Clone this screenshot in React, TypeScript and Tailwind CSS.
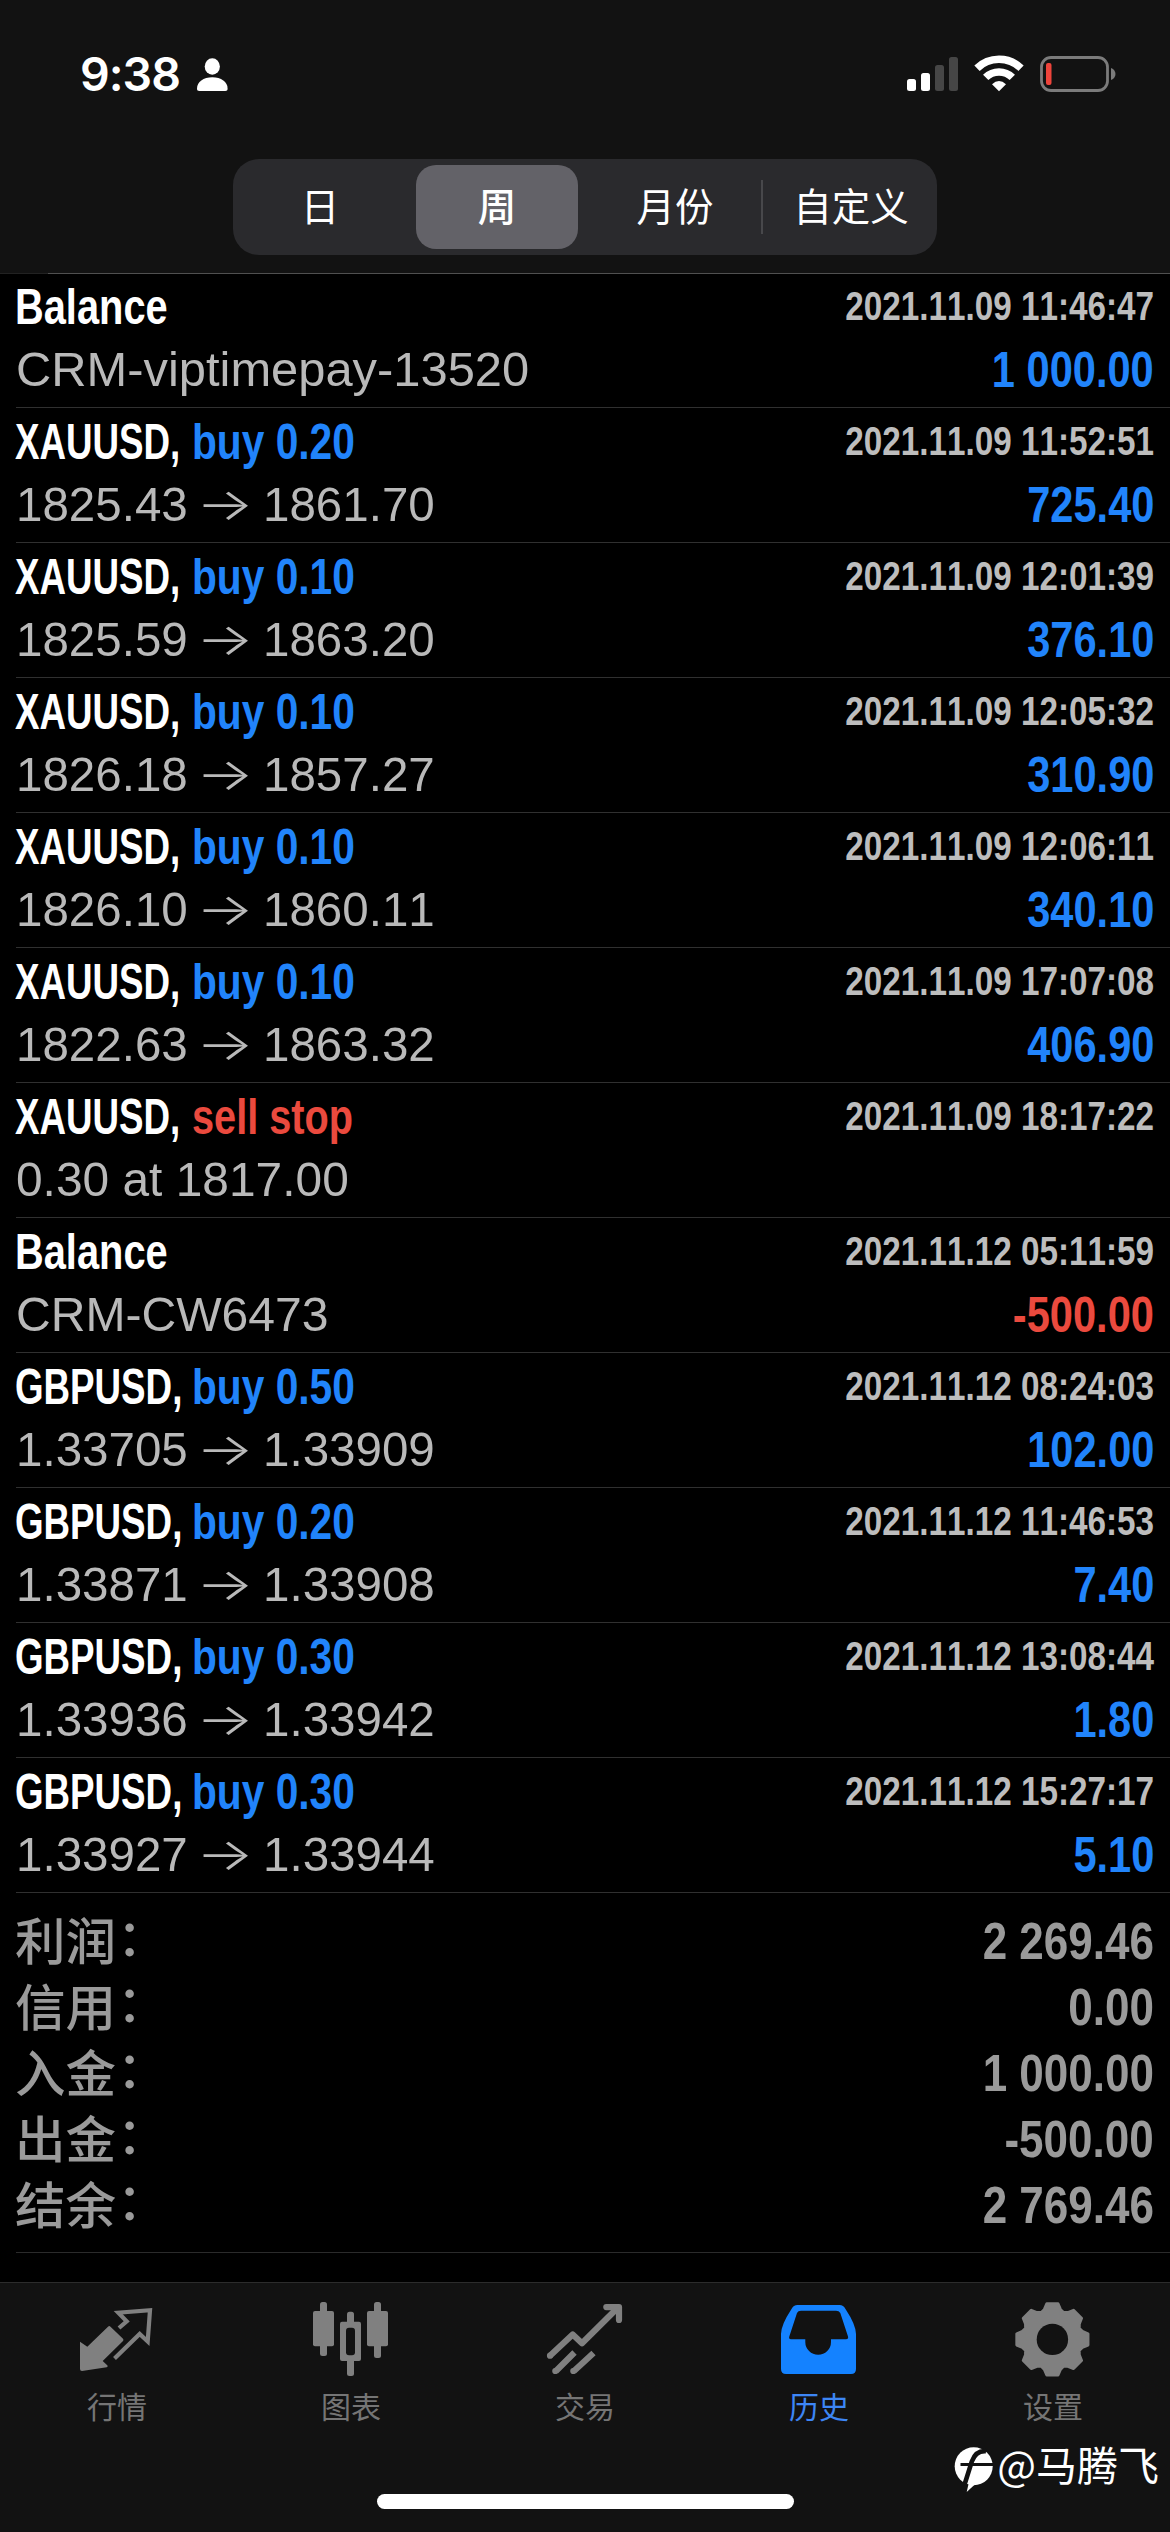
import React, { ReactNode } from "react";

type Tone = "blue" | "red";

interface Deal {
  name: string;
  action?: string;
  tone?: Tone;
  time: string;
  detail?: string;
  detailFit?: string;
  open?: string;
  close?: string;
  amount?: string;
  amountTone?: Tone;
}

const deals: Deal[] = [
  { name: "Balance", time: "2021.11.09 11:46:47", detail: "CRM-viptimepay-13520", detailFit: "scale-x-[0.997]", amount: "1 000.00" },
  { name: "XAUUSD", action: "buy 0.20", time: "2021.11.09 11:52:51", open: "1825.43", close: "1861.70", amount: "725.40" },
  { name: "XAUUSD", action: "buy 0.10", time: "2021.11.09 12:01:39", open: "1825.59", close: "1863.20", amount: "376.10" },
  { name: "XAUUSD", action: "buy 0.10", time: "2021.11.09 12:05:32", open: "1826.18", close: "1857.27", amount: "310.90" },
  { name: "XAUUSD", action: "buy 0.10", time: "2021.11.09 12:06:11", open: "1826.10", close: "1860.11", amount: "340.10" },
  { name: "XAUUSD", action: "buy 0.10", time: "2021.11.09 17:07:08", open: "1822.63", close: "1863.32", amount: "406.90" },
  { name: "XAUUSD", action: "sell stop", tone: "red", time: "2021.11.09 18:17:22", detail: "0.30 at 1817.00", detailFit: "scale-x-[0.977]" },
  { name: "Balance", time: "2021.11.12 05:11:59", detail: "CRM-CW6473", detailFit: "scale-x-[0.981]", amount: "-500.00", amountTone: "red" },
  { name: "GBPUSD", action: "buy 0.50", time: "2021.11.12 08:24:03", open: "1.33705", close: "1.33909", amount: "102.00" },
  { name: "GBPUSD", action: "buy 0.20", time: "2021.11.12 11:46:53", open: "1.33871", close: "1.33908", amount: "7.40" },
  { name: "GBPUSD", action: "buy 0.30", time: "2021.11.12 13:08:44", open: "1.33936", close: "1.33942", amount: "1.80" },
  { name: "GBPUSD", action: "buy 0.30", time: "2021.11.12 15:27:17", open: "1.33927", close: "1.33944", amount: "5.10" },
];

const totals = [
  ["利润", "2 269.46"],
  ["信用", "0.00"],
  ["入金", "1 000.00"],
  ["出金", "-500.00"],
  ["结余", "2 769.46"],
];

function toneClass(tone?: Tone) {
  return tone === "red" ? "text-[#eb4a3e]" : "text-[#2184fb]";
}

function StatusBar() {
  return (
    <div className="flex h-[148px] items-start justify-between pl-[80px] pr-[54px] pt-[44px]">
      <div className="flex items-start">
        <span className="w-[117px] whitespace-nowrap font-['Inter'] text-[46.500px] font-semibold leading-[60px] tracking-[-1px] text-white">9:38</span>
        <svg className="mt-[14px] h-[34px] w-[31px]" viewBox="0 0 31 34" fill="#fff">
          <ellipse cx="15.3" cy="8.5" rx="7.6" ry="8.2" />
          <path d="M0 30.5C0 24 6.5 19.3 15.3 19.3S30.6 24 30.6 30.5c0 1.800-.8 2.500-2.300 2.500H2.300C.8 33 0 32.300 0 30.500Z" />
        </svg>
      </div>
      <div className="flex items-start pt-[11px]">
        <svg className="h-[38px] w-[52px]" viewBox="0 0 52 38">
          <rect x="0" y="24" width="9" height="12" rx="2.500" fill="#fff" />
          <rect x="14" y="18" width="9" height="18" rx="2.500" fill="#fff" />
          <rect x="28" y="10" width="9" height="26" rx="2.500" fill="#464646" />
          <rect x="42" y="2" width="9" height="34" rx="2.500" fill="#464646" />
        </svg>
        <svg className="ml-[15px] h-[38px] w-[50px]" viewBox="0 0 50 38">
          <g fill="none" stroke="#fff" strokeWidth="7.600">
            <path d="M3 13.200A31.500 31.500 0 0 1 47 13.200" />
            <path d="M11.700 22.400A19 19 0 0 1 38.300 22.400" />
          </g>
          <path d="M25 36.300 18 29.200Q25 23 32 29.200Z" fill="#fff" />
        </svg>
        <svg className="ml-[16px] h-[38px] w-[76px]" viewBox="0 0 76 38">
          <rect x="1.500" y="2.500" width="66" height="33" rx="9.500" fill="none" stroke="#7b7b7b" strokeWidth="2.800" />
          <rect x="6" y="8" width="5.500" height="22" rx="2" fill="#ee443b" />
          <path d="M71 13c3 1.200 4.500 3.400 4.500 6S74 23.800 71 25Z" fill="#7b7b7b" />
        </svg>
      </div>
    </div>
  );
}

function Segment({ children, className }: { children: ReactNode; className: string }) {
  return <div className={"flex h-[84px] items-center justify-center pb-[5px] " + className}>{children}</div>;
}

function RangePicker() {
  return (
    <div className="ml-[233px] mt-[11px] flex h-[96px] w-[704px] items-center rounded-[26px] bg-[#2a2a2d] font-['Noto_Sans_CJK_SC',sans-serif] text-[38.500px] leading-none text-white">
      <Segment className="w-[174px]">日</Segment>
      <Segment className="ml-[9px] w-[162px] rounded-[20px] bg-[#636268] font-medium">周</Segment>
      <Segment className="w-[183px] pl-[11px]">月份</Segment>
      <div className="h-[54px] w-[2px] bg-[#48484b]" />
      <Segment className="flex-1 pl-[2px]">自定义</Segment>
    </div>
  );
}

function Condensed({ children, className }: { children: ReactNode; className: string }) {
  return <span className={"inline-block whitespace-nowrap [font-kerning:none] " + className}>{children}</span>;
}

function DealRow({ deal }: { deal: Deal }) {
  return (
    <div className="ml-[16px] h-[135px] border-b border-[#303030] pr-[16px] pt-[2px] leading-[63px]">
      <div className="flex h-[63px] justify-between font-bold">
        <div className="-ml-px flex text-[49.500px]">
          {deal.action ? (
            <>
              <div className="w-[177px]">
                <Condensed className="origin-left scale-x-[0.742] text-white">{deal.name + ","}</Condensed>
              </div>
              <Condensed
                className={
                  "origin-left " + (deal.tone === "red" ? "scale-x-[0.802] " : "scale-x-[0.822] ") + toneClass(deal.tone)
                }
              >
                {deal.action}
              </Condensed>
            </>
          ) : (
            <Condensed className="origin-left scale-x-[0.804] text-white">{deal.name}</Condensed>
          )}
        </div>
        <Condensed className="origin-right scale-x-[0.821] text-[40.500px] text-[#bdbdbd]">{deal.time}</Condensed>
      </div>
      <div className="flex h-[63px] justify-between">
        {deal.open ? (
          <div className="flex text-[49px] text-[#b9b9b9]">
            <div className="w-[180px]">
              <Condensed className="origin-left scale-x-[0.970]">{deal.open}</Condensed>
            </div>
            <div className="-mt-px w-[67px]">
              <Condensed className="origin-left scale-x-[1.380] font-['Inter'] text-[44px] font-light">→</Condensed>
            </div>
            <Condensed className="origin-left scale-x-[0.970]">{deal.close}</Condensed>
          </div>
        ) : (
          <Condensed className={"origin-left text-[49px] text-[#b9b9b9] " + deal.detailFit}>{deal.detail}</Condensed>
        )}
        {deal.amount && (
          <Condensed className={"origin-right scale-x-[0.840] text-[49.500px] font-bold " + toneClass(deal.amountTone)}>
            {deal.amount}
          </Condensed>
        )}
      </div>
    </div>
  );
}

function Totals() {
  return (
    <div className="ml-[16px] h-[360px] border-b border-[#2b2b2b] pr-[16px] pt-[15px] text-[#9a9a9a]">
      {totals.map(([label, value]) => (
        <div key={label} className="flex h-[66px] justify-between leading-[66px]">
          <div className="-ml-px -mt-[3px] flex font-['Noto_Sans_CJK_SC',sans-serif] text-[50.500px] font-medium">
            <span>{label}</span>
            <span className="-mt-[4px] ml-px">：</span>
          </div>
          <Condensed className="origin-right scale-x-[0.840] text-[52.400px] font-bold">{value}</Condensed>
        </div>
      ))}
    </div>
  );
}

function QuotesIcon() {
  return (
    <svg className="size-[78px]" viewBox="0 0 78 78">
      <path d="M41 28 48.700 21.300 40.300 12.700 72 10.200 69.700 41.500 61.700 34 36.500 58.500" fill="none" stroke="currentColor" strokeWidth="4.200" />
      <path d="M2 41.700 9.300 46.700 30 26.700Q31.300 25.500 32.500 26.700L45 38.700Q46 40 45 41L24.700 61 29.500 65.500Q30 67 28.700 67.300L4 71Q2 71 2 69Z" fill="currentColor" />
    </svg>
  );
}

function ChartIcon() {
  return (
    <svg className="size-[78px]" viewBox="0 0 78 78" fill="currentColor">
      <rect x="1" y="11" width="21" height="35.300" rx="2" />
      <rect x="8" y="2" width="7" height="54" rx="2.500" />
      <rect x="28" y="21.700" width="21" height="39.300" rx="2" />
      <rect x="35" y="11.700" width="7" height="64.300" rx="2.500" />
      <rect x="34" y="27.700" width="9" height="27.600" rx="3" fill="#121212" />
      <rect x="55" y="11" width="21" height="35.300" rx="2" />
      <rect x="62" y="2" width="7" height="56" rx="2.500" />
    </svg>
  );
}

function TradeIcon() {
  return (
    <svg className="size-[78px]" viewBox="0 0 78 78" fill="none" stroke="currentColor" strokeWidth="6.200">
      <path d="M4 55.700 26.700 34.500 36 43.300 71 8.500" strokeLinejoin="round" />
      <circle cx="4" cy="55.700" r="3.100" fill="currentColor" stroke="none" />
      <path d="M60.300 7.100H73V20" strokeLinecap="round" strokeLinejoin="round" />
      <path d="M66 8 72 14V8Z" fill="currentColor" stroke="none" />
      <path d="M9.700 71.300 28.500 52.500M27.700 71.300 47.500 53" />
      <circle cx="9.300" cy="71" r="3.100" fill="currentColor" stroke="none" />
      <circle cx="27.300" cy="71" r="3.100" fill="currentColor" stroke="none" />
    </svg>
  );
}

function HistoryIcon() {
  return (
    <svg className="size-[78px]" viewBox="0 0 78 78">
      <path
        fillRule="evenodd"
        fill="currentColor"
        d="M17.500 5H59.500Q63.500 5 65.500 9Q76 25 76 34V69Q76 74 71 74H6Q1 74 1 69V34Q1 25 11.500 9Q13.500 5 17.500 5ZM21 10.700Q18 10.700 17 13L9.300 36.500Q8.500 39.300 11 39.300H25.300V42A12.850 12.850 0 0 0 51 42V39.300H66Q68.700 39.300 68 36.500L60.300 13Q59 10.700 56 10.700Z"
      />
    </svg>
  );
}

const gearPath =
  Array.from({ length: 8 }, (_, tooth) =>
    [
      [-22.5, 29],
      [-15, 31],
      [-9, 36],
      [9, 36],
      [15, 31],
    ].map(([offset, radius]) => {
      const angle = ((tooth * 45 + offset) * Math.PI) / 180;
      return (38.4 + radius * Math.sin(angle)).toFixed(2) + " " + (39.4 - radius * Math.cos(angle)).toFixed(2);
    })
  )
    .flat()
    .map((point, i) => (i === 0 ? "M" : "L") + point)
    .join("") + "Z";

function SettingsIcon() {
  return (
    <svg className="size-[78px]" viewBox="0 0 78 78">
      <path d={gearPath} fill="currentColor" stroke="currentColor" strokeWidth="3" strokeLinejoin="round" />
      <circle cx="38.400" cy="39.400" r="15.700" fill="#121212" />
    </svg>
  );
}

function Tab({ icon, label, active = false }: { icon: ReactNode; label: string; active?: boolean }) {
  return (
    <div className={"flex w-[234px] flex-col items-center pt-[17px] " + (active ? "text-[#1482ff]" : "text-[#808080]")}>
      {icon}
      <span className={"mb-[2px] mt-[7px] font-['Noto_Sans_CJK_SC',sans-serif] text-[30px] leading-[40px] " + (active ? "text-[#3d86f5]" : "text-[#757575]")}>
        {label}
      </span>
    </div>
  );
}

function Watermark() {
  return (
    <div className="absolute right-[11px] top-[152px] flex items-start text-white">
      <svg className="mt-[12px] h-[46px] w-[40px]" viewBox="0 0 40 46">
        <circle cx="19.700" cy="19.300" r="19" fill="#fff" />
        <path d="M18 22 12.700 45 22.500 36Z" fill="#fff" />
        <path d="M32 4.200C24.500 3.500 20.500 7 17.800 14.500L8.500 44" fill="none" stroke="#121212" strokeWidth="4.600" />
        <path d="M6.500 17.500H40" stroke="#121212" strokeWidth="3" />
      </svg>
      <span className="ml-[3px] font-['Noto_Sans_CJK_SC',sans-serif] text-[41px] leading-[56px]">@马腾飞</span>
    </div>
  );
}

export default function App() {
  return (
    <div className="flex h-[2532px] w-[1170px] flex-col overflow-hidden bg-black font-['Liberation_Sans',sans-serif]">
      <header className="h-[273px] shrink-0 bg-[#121212]">
        <StatusBar />
        <RangePicker />
      </header>
      <div className="-mb-px h-px shrink-0 border-l-[48px] border-[#222] bg-[#505050]" />
      <main className="h-[2009px] shrink-0">
        {deals.map((deal) => (
          <DealRow key={deal.time} deal={deal} />
        ))}
        <Totals />
      </main>
      <footer className="relative h-[250px] shrink-0 border-t border-[#2c2c2c] bg-[#121212]">
        <nav className="flex">
          <Tab icon={<QuotesIcon />} label="行情" />
          <Tab icon={<ChartIcon />} label="图表" />
          <Tab icon={<TradeIcon />} label="交易" />
          <Tab icon={<HistoryIcon />} label="历史" active />
          <Tab icon={<SettingsIcon />} label="设置" />
        </nav>
        <div className="mx-auto mt-[67px] h-[15px] w-[417px] rounded-full bg-white" />
        <Watermark />
      </footer>
    </div>
  );
}
